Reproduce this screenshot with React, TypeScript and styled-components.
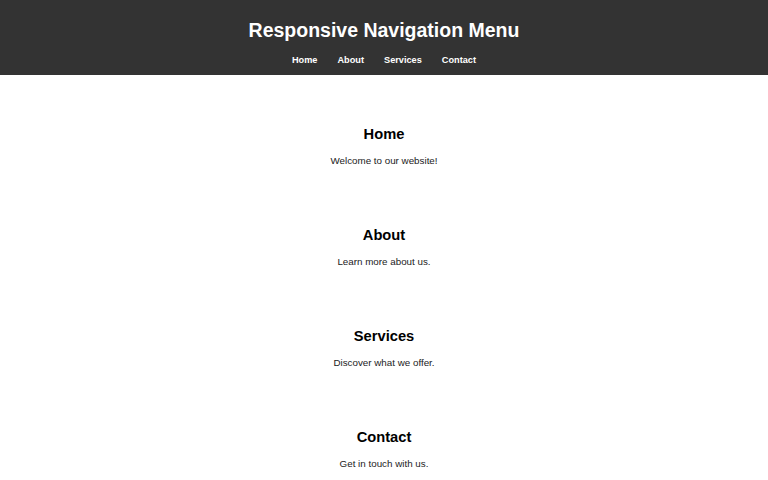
import React from 'react';
import styled, { createGlobalStyle } from 'styled-components';

const GlobalStyle = createGlobalStyle`
  body {
    margin: 0;
    font-family: "Liberation Sans", Arial, sans-serif;
    background: #fff;
    color: #000;
  }
`;

const Header = styled.header`
  background: #333;
  color: #fff;
  text-align: center;
  padding: 16px 0 8px;
`;

const Title = styled.h1`
  margin: 0;
  font-size: 19.5px;
  line-height: 28px;
  font-weight: bold;
`;

const Nav = styled.nav`
  display: flex;
  justify-content: center;
  gap: 20px;
  margin-top: 9px;
`;

const NavLink = styled.a`
  color: #fff;
  text-decoration: none;
  font-size: 9.2px;
  line-height: 14px;
  font-weight: bold;
  &:hover {
    color: #ddd;
  }
`;

const Main = styled.main`
  padding-top: 20px;
`;

const Section = styled.section`
  text-align: center;
  padding: 29px 0 28px;
`;

const Heading = styled.h2`
  margin: 0 0 10px;
  font-size: 14.7px;
  line-height: 20px;
  font-weight: bold;
`;

const Text = styled.p`
  margin: 0;
  font-size: 9.8px;
  line-height: 14px;
  color: #222;
`;

const sections = [
  { id: 'home', title: 'Home', text: 'Welcome to our website!' },
  { id: 'about', title: 'About', text: 'Learn more about us.' },
  { id: 'services', title: 'Services', text: 'Discover what we offer.' },
  { id: 'contact', title: 'Contact', text: 'Get in touch with us.' },
];

export default function App() {
  return (
    <>
      <GlobalStyle />
      <Header>
        <Title>Responsive Navigation Menu</Title>
        <Nav>
          {sections.map(s => (
            <NavLink key={s.id} href={`#${s.id}`}>{s.title}</NavLink>
          ))}
        </Nav>
      </Header>
      <Main>
        {sections.map(s => (
          <Section key={s.id} id={s.id}>
            <Heading>{s.title}</Heading>
            <Text>{s.text}</Text>
          </Section>
        ))}
      </Main>
    </>
  );
}
